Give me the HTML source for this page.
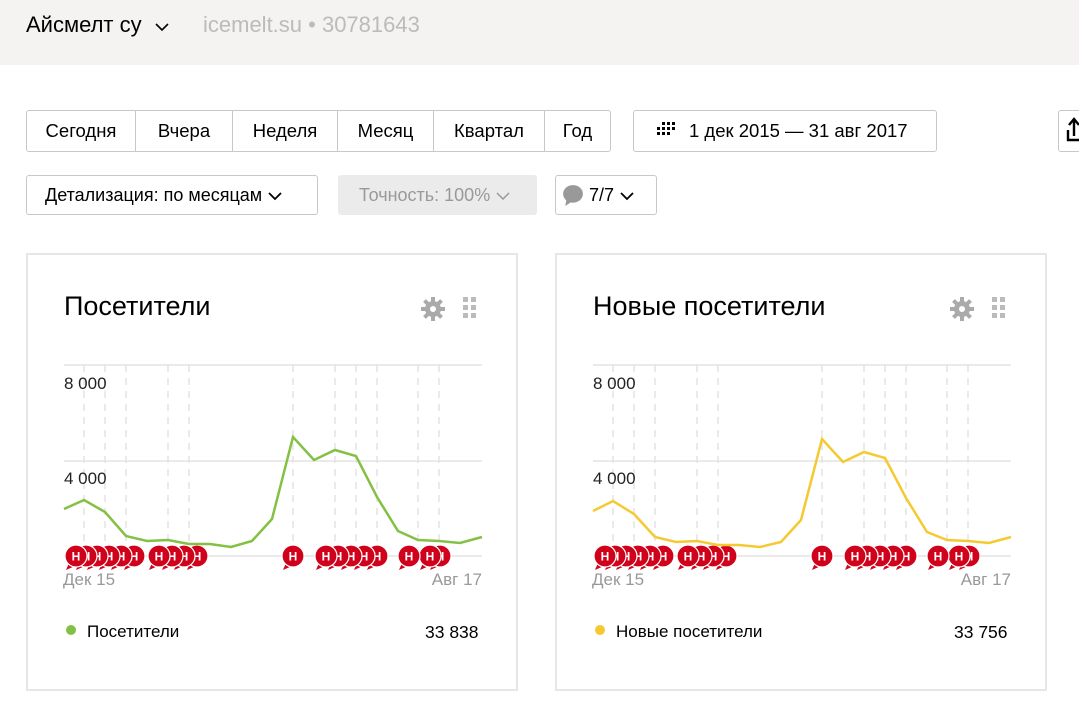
<!DOCTYPE html><html><head><meta charset="utf-8"><style>
body{margin:0;width:1079px;height:722px;overflow:hidden;background:#fff;font-family:"Liberation Sans",sans-serif;color:#000;position:relative}
.top{position:absolute;left:0;top:0;width:1079px;height:65px;background:#f4f3f1}
.a{position:absolute;white-space:nowrap}
.btn{position:absolute;border:1px solid #c8c8c8;border-radius:3px;height:40px;box-sizing:border-box;font-size:18px;line-height:38px;background:#fff}
.seg{position:absolute;top:110px;height:42px;line-height:40px;font-size:18.5px;text-align:center;border:1px solid #c8c8c8;box-sizing:border-box;background:#fff}
.card{position:absolute;top:253px;width:492px;height:438px;border:2px solid #e6e6e6;box-sizing:border-box}
</style></head><body>
<div class="top"></div>
<div class="a" style="left:26px;top:12px;font-size:22px">Айсмелт су&nbsp; <svg width="16" height="10" viewBox="0 0 16 10"><path d="M2 2l6 6 6-6" stroke="#000" stroke-width="1.6" fill="none"/></svg></div>
<div class="a" style="left:203px;top:12px;font-size:22px;color:#bbb">icemelt.su • 30781643</div>

<div class="seg" style="left:26px;width:110px;border-radius:3px 0 0 3px">Сегодня</div>
<div class="seg" style="left:135px;width:98px">Вчера</div>
<div class="seg" style="left:232px;width:106px">Неделя</div>
<div class="seg" style="left:337px;width:97px">Месяц</div>
<div class="seg" style="left:433px;width:112px">Квартал</div>
<div class="seg" style="left:544px;width:67px;border-radius:0 3px 3px 0">Год</div>
<div class="seg" style="left:633px;width:304px;border-radius:3px;text-align:left;padding-left:19px"><svg width="24" height="16" viewBox="0 0 24 16" style="vertical-align:-1px;margin-right:12px"><g fill="#000"><rect x="9" y="0" width="3" height="3"/><rect x="14" y="0" width="3" height="3"/><rect x="19" y="0" width="3" height="3"/><rect x="4" y="5" width="3" height="3"/><rect x="9" y="5" width="3" height="3"/><rect x="14" y="5" width="3" height="3"/><rect x="19" y="5" width="3" height="3"/><rect x="4" y="10" width="3" height="3"/><rect x="9" y="10" width="3" height="3"/><rect x="14" y="10" width="3" height="3"/></g></svg>1 дек 2015 — 31 авг 2017</div>
<div class="seg" style="left:1058px;width:40px;border-radius:3px"></div>
<svg class="a" style="left:1066px;top:116px" width="14" height="30" viewBox="0 0 14 30"><path d="M8 3V20M3 9l5-6 5 6M2 14V24H14" stroke="#000" stroke-width="2.4" fill="none"/></svg>

<div class="btn" style="left:26px;top:175px;width:292px;padding-left:18px">Детализация: по месяцам <svg width="16" height="10" viewBox="0 0 16 10"><path d="M2 2l6 6 6-6" stroke="#000" stroke-width="1.8" fill="none"/></svg></div>
<div class="btn" style="left:338px;top:175px;width:199px;padding-left:20px;background:#ebebeb;border-color:#ebebeb;color:#999">Точность: 100% <svg width="16" height="10" viewBox="0 0 16 10"><path d="M2 2l6 6 6-6" stroke="#999" stroke-width="1.5" fill="none"/></svg></div>
<div class="btn" style="left:555px;top:175px;width:102px;padding-left:6px"><svg width="22" height="22" viewBox="0 0 20 20" style="vertical-align:-5px"><ellipse cx="10" cy="9" rx="9" ry="8" fill="#999"/><path d="M4 14l-1 6 6-4z" fill="#999"/></svg> 7/7 <svg width="16" height="10" viewBox="0 0 16 10"><path d="M2 2l6 6 6-6" stroke="#000" stroke-width="1.8" fill="none"/></svg></div>

<div class="card" style="left:26px"></div>
<div class="card" style="left:555px"></div>
<div class="a" style="left:64px;top:291px;font-size:27px">Посетители</div>
<div class="a" style="left:593px;top:291px;font-size:27px">Новые посетители</div>

<svg id="s" width="1079" height="722" style="position:absolute;left:0;top:0" font-family="Liberation Sans,sans-serif">
<defs>
<g id="gear"><circle cx="0" cy="0" r="8" fill="#aaa"/><g stroke="#aaa" stroke-width="4"><path d="M0-12V12M-12 0H12M-8.5-8.5L8.5 8.5M-8.5 8.5L8.5-8.5"/></g><circle r="3" fill="#fff"/></g>
<g id="dots" fill="#bbb"><rect x="0" y="0" width="5" height="5"/><rect x="8" y="0" width="5" height="5"/><rect x="0" y="8" width="5" height="5"/><rect x="8" y="8" width="5" height="5"/><rect x="0" y="16" width="5" height="5"/><rect x="8" y="16" width="5" height="5"/></g>
<g id="m"><path d="M-7 7l-3 7 9-4z" fill="#d0021b"/><circle r="11" fill="#d0021b" stroke="#fff" stroke-width="1.2"/><text y="4.5" text-anchor="middle" font-size="12" font-weight="bold" fill="#fff">Н</text></g>
<g id="grid">
<g stroke="#e3e3e3" stroke-width="1.5"><path d="M64 365H482M64 461H482M64 556H482"/></g>
<g stroke="#e3e3e3" stroke-width="1.5" stroke-dasharray="7 6"><path d="M84 365V556M105 365V556M126 365V556M168 365V556M189 365V556M293 365V556M335 365V556M356 365V556M377 365V556M418 365V556M439 365V556"/></g>
<text x="64" y="389" font-size="17" fill="#222">8 000</text>
<text x="64" y="484" font-size="17" fill="#222">4 000</text>
<text x="63" y="585" font-size="17" fill="#999">Дек 15</text>
<text x="482" y="585" font-size="17" fill="#999" text-anchor="end">Авг 17</text>
<g>
<use href="#m" x="440" y="556"/><use href="#m" x="430" y="556"/><use href="#m" x="409" y="556"/>
<use href="#m" x="377" y="556"/><use href="#m" x="364" y="556"/><use href="#m" x="351" y="556"/><use href="#m" x="338" y="556"/><use href="#m" x="326" y="556"/>
<use href="#m" x="293" y="556"/>
<use href="#m" x="197" y="556"/><use href="#m" x="184" y="556"/><use href="#m" x="172" y="556"/><use href="#m" x="159" y="556"/>
<use href="#m" x="134" y="556"/><use href="#m" x="121" y="556"/><use href="#m" x="109" y="556"/><use href="#m" x="97" y="556"/><use href="#m" x="86" y="556"/><use href="#m" x="76" y="556"/>
</g>
<use href="#gear" x="433" y="309"/><use href="#dots" x="463" y="297"/>
</g>
</defs>
<use href="#grid"/>
<polyline fill="none" stroke="#84c043" stroke-width="2.5" points="64,509 84,500 105,512 126,536 147,541 168,540 189,544 210,544 231,547 252,541 272,519 293,437 314,460 335,450 356,456 377,497 398,531 418,540 439,541 460,543 482,537"/>
<use href="#grid" x="529"/>
<polyline fill="none" stroke="#f5c932" stroke-width="2.5" transform="translate(529,0)" points="64,511 84,501 105,514 126,537 147,542 168,541 189,545 210,545 231,547 252,542 272,520 293,439 314,462 335,452 356,458 377,498 398,532 418,540 439,541 460,543 482,537"/>
<circle cx="71" cy="630" r="5" fill="#84c043"/>
<circle cx="600" cy="630" r="5" fill="#f5c932"/>
</svg>
<div class="a" style="left:87px;top:622px;font-size:17px">Посетители</div>
<div class="a" style="left:425px;top:622px;font-size:17.5px">33 838</div>
<div class="a" style="left:616px;top:622px;font-size:17px">Новые посетители</div>
<div class="a" style="left:954px;top:622px;font-size:17.5px">33 756</div>
</body></html>
